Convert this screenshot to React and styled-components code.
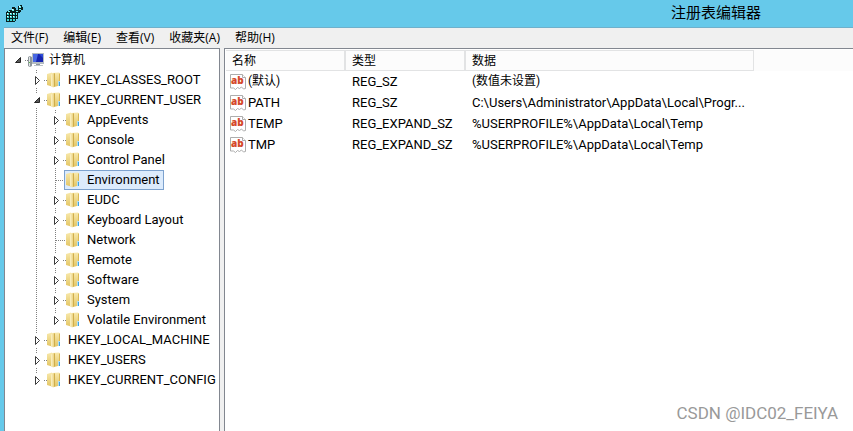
import React, { useState } from 'react';
import styled, { createGlobalStyle } from 'styled-components';

const menus = ['文件(F)', '编辑(E)', '查看(V)', '收藏夹(A)', '帮助(H)']

const columns = [
    { title: '名称', width: 120 },
    { title: '类型', width: 120 },
    { title: '数据', width: 288 },
]

const values = [
    { name: '(默认)', type: 'REG_SZ', data: '(数值未设置)', unset: true },
    { name: 'PATH', type: 'REG_SZ', data: 'C:\\Users\\Administrator\\AppData\\Local\\Progr...' },
    { name: 'TEMP', type: 'REG_EXPAND_SZ', data: '%USERPROFILE%\\AppData\\Local\\Temp' },
    { name: 'TMP', type: 'REG_EXPAND_SZ', data: '%USERPROFILE%\\AppData\\Local\\Temp' },
]

const registry = {
    name: '计算机',
    icon: 'computer',
    children: [
        { name: 'HKEY_CLASSES_ROOT', children: [] },
        {
            name: 'HKEY_CURRENT_USER',
            children: [
                { name: 'AppEvents', children: [] },
                { name: 'Console', children: [] },
                { name: 'Control Panel', children: [] },
                { name: 'Environment' },
                { name: 'EUDC', children: [] },
                { name: 'Keyboard Layout', children: [] },
                { name: 'Network' },
                { name: 'Remote', children: [] },
                { name: 'Software', children: [] },
                { name: 'System', children: [] },
                { name: 'Volatile Environment', children: [] },
            ],
        },
        { name: 'HKEY_LOCAL_MACHINE', children: [] },
        { name: 'HKEY_USERS', children: [] },
        { name: 'HKEY_CURRENT_CONFIG', children: [] },
    ],
}

const RegeditIcon = () => (
    <svg width="18" height="18" viewBox="0 0 18 18" shapeRendering="crispEdges" aria-hidden="true">
        <path d="M1 7h1v-1h2v-1h3v-3h3v1h1v2h2v-4h2v-1h2v2h1v3h-2v2h-1v1h-2v6h-1v1h-1v1h-1v1h-9z" fill="#08201f" />
        <path d="M2 8h2v2h-2zM5 8h2v2h-2zM8 8h2v2h-2zM2 11h2v2h-2zM5 11h2v2h-2zM8 11h2v2h-2zM2 14h2v2h-2zM5 14h2v2h-2zM8 14h2v2h-2z" fill="#3fd6d3" />
        <path d="M3 6h2v1h-2zM7 4h2v2h-2zM11 8h1v2h-1zM11 11h1v2h-1zM11 14h1v1h-1zM14 1h2v2h-2zM14 4h2v1h-2zM11 6h2v1h-2z" fill="#6ff3f0" />
        <path d="M2 8h1v1h-1zM5 8h1v1h-1zM8 8h1v1h-1zM2 11h1v1h-1zM5 11h1v1h-1zM8 11h1v1h-1zM14 1h1v1h-1zM7 4h1v1h-1z" fill="#fff" />
    </svg>
)

const ComputerIcon = () => (
    <svg width="16" height="16" viewBox="0 0 16 16" aria-hidden="true">
        <path d="M0 5l2-1 2 1v9l-2 1-2-1z" fill="#8f979c" />
        <path d="M1 5h1v9h-1z" fill="#e2e6e8" />
        <path d="M1 10h1v1h-1z" fill="#58b947" />
        <path d="M4 1h12v11h-12z" fill="#b4bcc2" />
        <path d="M5 2h10v8h-10z" fill="#1726b0" />
        <path d="M5 2h5l-2 8h-3z" fill="#4867e2" />
        <path d="M11 2h4v4z" fill="#2d4bd8" />
        <path d="M8 12h4v1h-4z" fill="#8d959b" />
        <path d="M6 13h9v1h-9z" fill="#bcc3c8" />
    </svg>
)

const FolderIcon = () => (
    <svg width="16" height="16" viewBox="0 0 16 16" aria-hidden="true">
        <defs>
            <linearGradient id="folderBack" x1="0" y1="0" x2="0" y2="1">
                <stop offset="0" stopColor="#f8e9ac" />
                <stop offset="1" stopColor="#e3c564" />
            </linearGradient>
            <linearGradient id="folderFront" x1="0" y1="0" x2="1" y2="0">
                <stop offset="0" stopColor="#fbf2c8" />
                <stop offset="1" stopColor="#e6c96c" />
            </linearGradient>
        </defs>
        <path d="M5 1l7-.5 1 1v12l-6 1.500z" fill="url(#folderBack)" />
        <path d="M12.500 1.500v11.500" stroke="#d9b954" />
        <path d="M0 2l5-1.500v14l-5-1.500z" fill="url(#folderBack)" />
        <path d="M4 2.500l3-1.500 1 .5v13l-2 1-2-1.500z" fill="url(#folderFront)" />
        <path d="M7.500 1.500v13" stroke="#cfad4c" />
        <path d="M11 9h2v5h-2z" fill="#b5ddee" />
        <path d="M12 10h1v4h-1z" fill="#3fa5df" />
    </svg>
)

const StringIcon = () => (
    <svg width="16" height="16" viewBox="0 0 16 16" aria-hidden="true">
        <path d="M.5.5h12l3 3v11l-2 .5-2-2-2 1.500-2-1-2 2-2-1.500-3 0z" fill="#fff" stroke="#adadad" />
        <path d="M12.500.5v3h3" fill="#fff" stroke="#adadad" />
        <text x="1" y="10" fontFamily="Open Sans, sans-serif" fontSize="10" fontWeight="800" fill="#d5482a">ab</text>
    </svg>
)

// dots every other pixel, as in the classic tree view
const Dots = ({ d }) => <path d={d} stroke="#808080" strokeDasharray="1 1" fill="none" shapeRendering="crispEdges" />

const Guide = ({ blank }) => (
    <Cell viewBox="0 0 19 20" aria-hidden="true">
        {!blank && <Dots d="M10.500 0V20" />}
    </Cell>
)

const Branch = ({ state, root, last }) => (
    <Cell viewBox="0 0 19 20" aria-hidden="true">
        {!root && <Dots d={state === 'leaf' ? 'M10.500 0V10' : 'M10.500 0V4'} />}
        {!root && !last && <Dots d={state === 'leaf' ? 'M10.500 10V20' : 'M10.500 18V20'} />}
        <Dots d={state === 'leaf' ? 'M11 10.500H21' : 'M18 10.500H21'} />
        {state === 'closed' && <path d="M9.500 6.500v8l4-4z" fill="#fff" stroke="#3c3c3c" />}
        {state === 'open' && <path d="M13.500 7.500v5h-5z" fill="#595959" stroke="#262626" />}
    </Cell>
)

const TreeNode = ({ node, guides = [], root, last, selected, onSelect }) => {
    const [open, setOpen] = useState(Boolean(node.children && node.children.length))
    const state = !node.children ? 'leaf' : open ? 'open' : 'closed'
    const childGuides = root ? [true] : [...guides, last]

    return <li role="treeitem" aria-expanded={node.children ? open : undefined} aria-selected={selected === node.name}>
        <TreeRow>
            {guides.map((blank, index) => <Guide key={index} blank={blank} />)}
            {state === 'leaf'
                ? <Branch state={state} last={last} />
                : <Toggle type="button" aria-label={node.name} onClick={() => setOpen(!open)}>
                    <Branch state={state} root={root} last={last} />
                </Toggle>}
            <NodeLabel type="button" $selected={selected === node.name} $cjk={root} onClick={() => onSelect(node.name)}>
                {node.icon === 'computer' ? <ComputerIcon /> : <FolderIcon />}
                {node.name}
            </NodeLabel>
        </TreeRow>
        {open && node.children && <Branches role="group">
            {node.children.map((child, index) => (
                <TreeNode
                    key={child.name}
                    node={child}
                    guides={childGuides}
                    last={index === node.children.length - 1}
                    selected={selected}
                    onSelect={onSelect}
                />
            ))}
        </Branches>}
    </li>
}

const App = () => {
    const [selected, setSelected] = useState('Environment')

    return <Window>
        <GlobalStyle />
        <TitleBar>
            <RegeditIcon />
            <WindowTitle>注册表编辑器</WindowTitle>
        </TitleBar>
        <Frame>
            <MenuBar>
                {menus.map(menu => <MenuButton key={menu} type="button">{menu}</MenuButton>)}
            </MenuBar>
            <Panes>
                <TreePane>
                    <Branches role="tree">
                        <TreeNode node={registry} root selected={selected} onSelect={setSelected} />
                    </Branches>
                </TreePane>
                <ListPane>
                    <HeaderStrip />
                    <ValueTable>
                        <colgroup>
                            {columns.map(column => <col key={column.title} style={{ width: column.width }} />)}
                        </colgroup>
                        <thead>
                            <tr>
                                {columns.map(column => <HeadCell key={column.title} scope="col">{column.title}</HeadCell>)}
                            </tr>
                        </thead>
                        <tbody>
                            {values.map(value => (
                                <tr key={value.name}>
                                    <ValueCell $cjk={value.unset}>
                                        <ValueName><StringIcon />{value.name}</ValueName>
                                    </ValueCell>
                                    <ValueCell>{value.type}</ValueCell>
                                    <ValueCell $cjk={value.unset}>{value.data}</ValueCell>
                                </tr>
                            ))}
                        </tbody>
                    </ValueTable>
                </ListPane>
            </Panes>
        </Frame>
        <Watermark>CSDN @IDC02_FEIYA</Watermark>
    </Window>
}

export default App;

const GlobalStyle = createGlobalStyle`
    * {
        box-sizing: border-box;
    }

    body {
        margin: 0;
        color: #000;
        font-family: 'Open Sans', 'Noto Sans CJK SC', sans-serif;
        font-size: 12px;
    }

    button {
        margin: 0;
        border: 0;
        padding: 0;
        background: none;
        color: inherit;
        font: inherit;
    }
`

const Window = styled.div`
    position: relative;
    display: flex;
    flex-direction: column;
    height: 100vh;
    overflow: hidden;
    background: #66c9ea;
`

const TitleBar = styled.header`
    display: flex;
    align-items: center;
    justify-content: space-between;
    height: 27px;
    padding: 0 92px 0 5px;
`

const WindowTitle = styled.h1`
    margin: 0;
    font-size: 15px;
    font-weight: 400;
    line-height: 20px;
    padding-bottom: 4px;
`

const Frame = styled.main`
    flex: 1;
    min-height: 0;
    display: flex;
    flex-direction: column;
    margin-left: 4px;
    border-top: 1px solid #6fb0cb;
    background: #f0f0f0;
`

const MenuBar = styled.nav`
    display: flex;
    gap: 1px;
    height: 20px;
`

const MenuButton = styled.button`
    padding: 0 7px;
    line-height: 20px;
    white-space: nowrap;
`

const Panes = styled.div`
    flex: 1;
    min-height: 0;
    display: flex;
    gap: 4px;
`

const Pane = styled.section`
    border: 1px solid #828790;
    border-bottom: 0;
    background: #fff;
    overflow: hidden;
`

const TreePane = styled(Pane)`
    flex: 0 0 216px;
    padding: 1px 0 0 2px;
`

const ListPane = styled(Pane)`
    flex: 1;
    min-width: 0;
    border-right: 0;
    padding: 1px 0 0 1px;
`

const Branches = styled.ul`
    margin: 0;
    padding: 0;
    list-style: none;
`

const TreeRow = styled.div`
    display: flex;
    height: 20px;
`

const Cell = styled.svg`
    display: block;
    flex: none;
    width: 19px;
    height: 20px;
    overflow: visible;
`

const Toggle = styled.button`
    flex: none;
    width: 19px;
`

const NodeLabel = styled.button`
    display: flex;
    align-items: center;
    gap: 5px;
    border: 1px solid ${({ $selected }) => ($selected ? '#7da2ce' : 'transparent')};
    padding: 0 3px 0 1px;
    background: ${({ $selected }) => ($selected ? '#dcebfc' : 'none')};
    font-family: Roboto, 'Noto Sans CJK SC', sans-serif;
    font-size: ${({ $cjk }) => ($cjk ? '12px' : '13px')};
    line-height: 18px;
    white-space: nowrap;
`

const HeaderStrip = styled.div`
    height: 21px;
    margin-bottom: -21px;
    background: #fcfcfc;
`

const ValueTable = styled.table`
    position: relative;
    width: 528px;
    table-layout: fixed;
    border-collapse: separate;
    border-spacing: 0;
`

const HeadCell = styled.th`
    height: 21px;
    border: solid #e2e3e4;
    border-width: 1px 2px 1px 0;
    padding: 0 0 0 6px;
    font-weight: 400;
    line-height: 19px;
    text-align: left;

    &:last-child {
        border-right-width: 1px;
    }
`

const ValueCell = styled.td`
    height: 21px;
    padding: 0 0 0 6px;
    font-family: Roboto, 'Noto Sans CJK SC', sans-serif;
    font-size: ${({ $cjk }) => ($cjk ? '12px' : '13px')};
    line-height: 21px;
    white-space: nowrap;

    &:first-child {
        padding-left: 4px;
    }
`

const ValueName = styled.span`
    display: flex;
    align-items: center;
    gap: 2px;
`

const Watermark = styled.div`
    position: absolute;
    right: 15px;
    bottom: 8px;
    color: #999;
    font-family: Roboto, 'Liberation Sans', sans-serif;
    font-size: 17px;
    line-height: 20px;
`
